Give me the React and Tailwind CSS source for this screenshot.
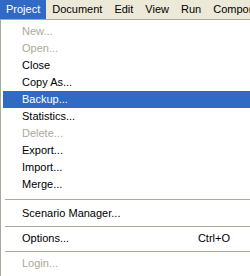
import React from 'react';

const menuBar = ['Project', 'Document', 'Edit', 'View', 'Run', 'Compon'];

const items = [
    { label: 'New...', disabled: true },
    { label: 'Open...', disabled: true },
    { label: 'Close' },
    { label: 'Copy As...' },
    { label: 'Backup...', active: true },
    { label: 'Statistics...' },
    { label: 'Delete...', disabled: true },
    { label: 'Export...' },
    { label: 'Import...' },
    { label: 'Merge...' },
    { sep: 'h-[12px]' },
    { label: 'Scenario Manager...' },
    { sep: 'h-[8px]' },
    { label: 'Options...', shortcut: 'Ctrl+O' },
    { sep: 'h-[8px]' },
    { label: 'Login...', disabled: true },
];

const MenuItem = ({ label, shortcut, disabled, active }) => {
    const tone = active ? 'bg-[#316ac5] text-white' : disabled ? 'text-[#aca899]' : 'text-black';
    return (
        <div className={`ml-[2px] h-[17px] flex items-center pl-[19px] pr-[20px] ${tone}`}>
            <span className="flex-1 whitespace-nowrap">{label}</span>
            {shortcut && <span className="whitespace-nowrap">{shortcut}</span>}
        </div>
    );
};

const App = () => (
    <div className="w-[250px] h-[276px] overflow-hidden bg-white text-[11px] leading-none" style={{ fontFamily: '"Liberation Sans", Arial, sans-serif' }}>
        <div className="h-[19px] bg-[#ece9d8] flex items-stretch whitespace-nowrap">
            {menuBar.map((m, i) => (
                <div
                    key={m}
                    className={`flex items-center px-[6px] ${i === 0 ? 'bg-[#316ac5] text-white' : 'text-black'}`}
                >
                    {m}
                </div>
            ))}
        </div>
        <div className="h-[257px] border-t border-l border-[#aca899] pt-[3px]">
            {items.map((it, i) =>
                it.sep ? (
                    <div key={i} className={`${it.sep} flex items-center pl-[4px]`}>
                        <div className="flex-1 border-t border-[#aca899]" />
                    </div>
                ) : (
                    <MenuItem key={i} {...it} />
                )
            )}
        </div>
    </div>
);

export default App;
